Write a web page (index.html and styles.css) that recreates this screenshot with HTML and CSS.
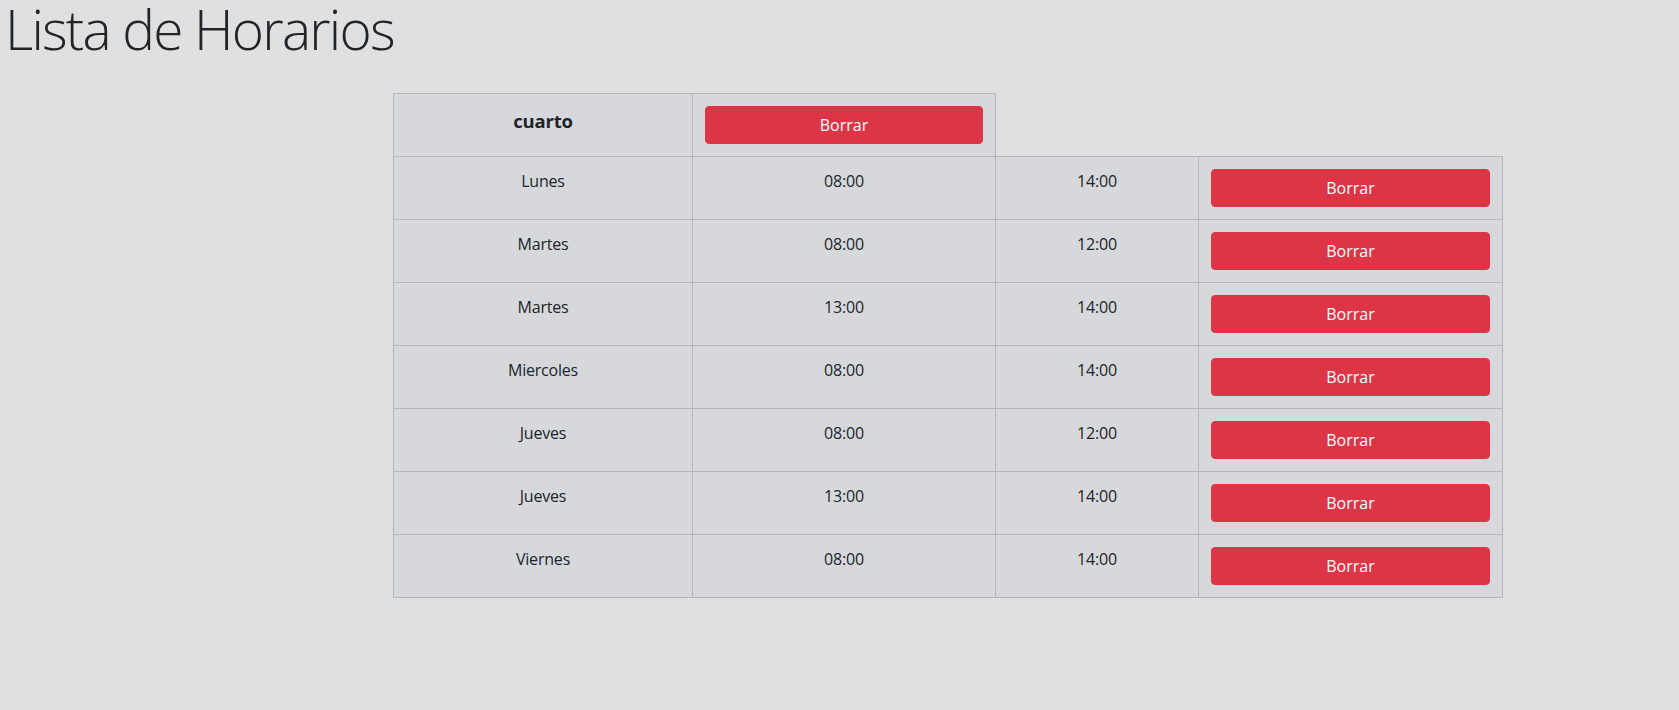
FILE: index.html
```html
<!DOCTYPE html>
<html lang="es">
<head>
<meta charset="utf-8">
<title>Lista de Horarios</title>
<link rel="stylesheet" href="styles.css">
</head>
<body>
<h1 class="page-title">Lista de Horarios</h1>
<div class="table-wrap">
  <table class="schedule">
    <colgroup>
      <col class="c1"><col class="c2"><col class="c3"><col class="c4">
    </colgroup>
    <tr class="room-row">
      <th class="room-name"><h5>cuarto</h5></th>
      <td><button class="btn-danger">Borrar</button></td>
    </tr>
    <tr><td>Lunes</td><td>08:00</td><td>14:00</td><td><button class="btn-danger">Borrar</button></td></tr>
    <tr><td>Martes</td><td>08:00</td><td>12:00</td><td><button class="btn-danger">Borrar</button></td></tr>
    <tr><td>Martes</td><td>13:00</td><td>14:00</td><td><button class="btn-danger">Borrar</button></td></tr>
    <tr><td>Miercoles</td><td>08:00</td><td>14:00</td><td><button class="btn-danger">Borrar</button></td></tr>
    <tr><td>Jueves</td><td>08:00</td><td>12:00</td><td><button class="btn-danger">Borrar</button></td></tr>
    <tr><td>Jueves</td><td>13:00</td><td>14:00</td><td><button class="btn-danger">Borrar</button></td></tr>
    <tr><td>Viernes</td><td>08:00</td><td>14:00</td><td><button class="btn-danger">Borrar</button></td></tr>
  </table>
</div>
</body>
</html>
```
FILE: styles.css
```css
html, body {
  margin: 0;
  padding: 0;
}
body {
  background: #e0e0e0;
  color: #212529;
  font-family: "Open Sans", "Noto Sans", sans-serif;
  font-size: 16px;
  line-height: 1.5;
}
.page-title {
  margin: 0;
  padding-left: 5px;
  font-family: "Open Sans", sans-serif;
  font-weight: 300;
  font-size: 55px;
  line-height: 58px;
  letter-spacing: -1.8px;
}
.table-wrap {
  padding-left: 393px;
  padding-top: 35px;
}
.schedule {
  border-collapse: collapse;
  table-layout: fixed;
  width: 1110px;
}
.c1 { width: 299px; }
.c2 { width: 303px; }
.c3 { width: 203px; }
.c4 { width: 304px; }
.schedule td, .schedule th {
  background: #d6d8db;
  border: 1px solid #b3b7bb;
  padding: 12px;
  text-align: center;
  vertical-align: top;
  font-weight: 400;
  letter-spacing: -0.2px;
}
.schedule .room-name {
  vertical-align: middle;
}
.room-name h5 {
  margin: 0 0 8px;
  font-size: 18.5px;
  line-height: 24px;
  font-weight: 700;
}
.btn-danger {
  display: block;
  width: 100%;
  height: 38px;
  margin: 0;
  padding: 6px 12px;
  border: 1px solid #dc3545;
  border-radius: 4px;
  background: #dc3545;
  color: #fff;
  font-family: inherit;
  font-size: 16px;
  line-height: 24px;
  cursor: pointer;
}
```
